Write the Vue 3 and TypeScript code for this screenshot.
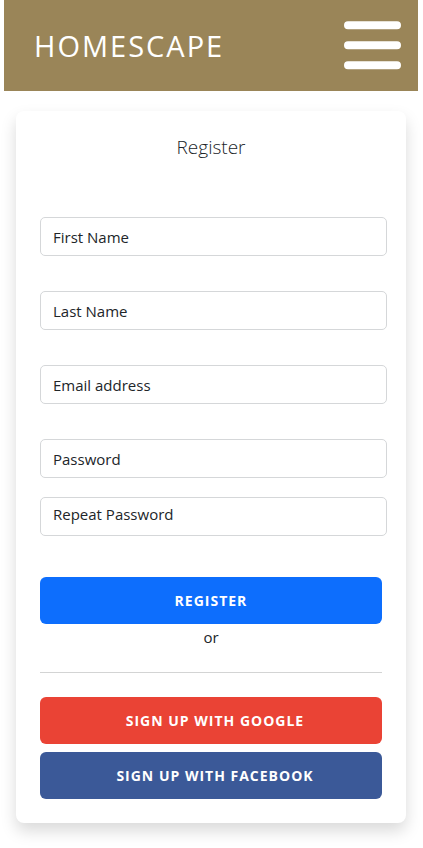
<script setup lang="ts">
import { reactive } from 'vue'

interface Field {
  id: string
  label: string
  type: string
  variant?: string
}

const fields: Field[] = [
  { id: 'firstName', label: 'First Name', type: 'text' },
  { id: 'lastName', label: 'Last Name', type: 'text' },
  { id: 'email', label: 'Email address', type: 'email' },
  { id: 'password', label: 'Password', type: 'password' },
  { id: 'repeatPassword', label: 'Repeat Password', type: 'password', variant: 'field-repeat' },
]

const form = reactive<Record<string, string>>({
  firstName: '',
  lastName: '',
  email: '',
  password: '',
  repeatPassword: '',
})
</script>

<template>
  <div class="page">
    <header class="navbar">
      <a class="brand" href="#">HOMESCAPE</a>
      <button class="menu" type="button" aria-label="Menu">
        <svg viewBox="0 0 58 50" width="58" height="50" aria-hidden="true">
          <path d="M4 4.3H53M4 24.3H53M4 44.3H53" stroke="#fff" stroke-width="8" stroke-linecap="round" />
        </svg>
      </button>
    </header>

    <main class="card">
      <h1 class="title">Register</h1>
      <form @submit.prevent>
        <div class="fields">
          <div v-for="field in fields" :key="field.id" class="field" :class="field.variant">
            <input :id="field.id" v-model="form[field.id]" :type="field.type" />
            <label v-show="!form[field.id]" :for="field.id">{{ field.label }}</label>
          </div>
        </div>
        <button class="btn btn-primary" type="submit">REGISTER</button>
        <p class="or">or</p>
        <hr class="divider" />
        <div class="social">
          <button class="btn btn-social btn-google" type="button">SIGN UP WITH GOOGLE</button>
          <button class="btn btn-social btn-facebook" type="button">SIGN UP WITH FACEBOOK</button>
        </div>
      </form>
    </main>
  </div>
</template>

<style>
body {
  background: #fff;
}
</style>

<style scoped>
.page,
.page * {
  box-sizing: border-box;
}

.page {
  padding: 0 5px 24px 4px;
  font-family: "Open Sans", "Noto Sans", sans-serif;
  font-size: 15px;
  line-height: 24px;
  color: #212529;
}

.navbar {
  display: flex;
  align-items: center;
  justify-content: space-between;
  height: 91px;
  padding: 0 16px 0 30px;
  background: #9a8558;
}

.brand {
  font-size: 29px;
  line-height: 40px;
  letter-spacing: 2px;
  color: #fff;
  text-decoration: none;
}

.menu {
  display: flex;
  padding: 0;
  border: 0;
  background: none;
  cursor: pointer;
}

.menu path {
  fill: none;
}

.card {
  margin: 20px 12px 0;
  padding: 24px;
  border-radius: 8px;
  background: #fff;
  box-shadow: 0 8px 16px rgba(0, 0, 0, 0.15);
}

.title {
  margin: 0 0 58px;
  font-size: 19px;
  font-weight: 300;
  line-height: 24px;
  text-align: center;
}

.fields {
  display: flex;
  flex-direction: column;
  gap: 35px;
  margin: 0 -5px 41px 0;
}

.field {
  display: grid;
}

.field input,
.field label {
  grid-area: 1 / 1;
}

.field input {
  width: 100%;
  height: 39px;
  padding: 6px 12px;
  border: 1px solid #d5d7d9;
  border-radius: 5px;
  background: #fff;
  font: inherit;
  color: inherit;
}

.field label {
  align-self: center;
  justify-self: start;
  padding-left: 13px;
  cursor: text;
}

.field-repeat {
  margin-top: -16px;
}

.field-repeat label {
  align-self: start;
  padding-top: 5px;
}

.btn {
  display: block;
  width: 100%;
  height: 47px;
  padding: 0 16px;
  border: 0;
  border-radius: 6px;
  font-family: inherit;
  font-size: 14px;
  font-weight: 700;
  line-height: 24px;
  letter-spacing: 1px;
  color: #fff;
  cursor: pointer;
}

.btn-primary {
  background: #0d6efd;
}

.or {
  margin: 1px 0 23px;
  text-align: center;
}

.divider {
  height: 1px;
  margin: 0 0 24px;
  border: 0;
  background: #d3d4d4;
}

.social {
  display: grid;
  gap: 8px;
}

.btn-social {
  padding-left: 24px;
}

.btn-google {
  background: #ea4335;
}

.btn-facebook {
  background: #3b5998;
}
</style>
